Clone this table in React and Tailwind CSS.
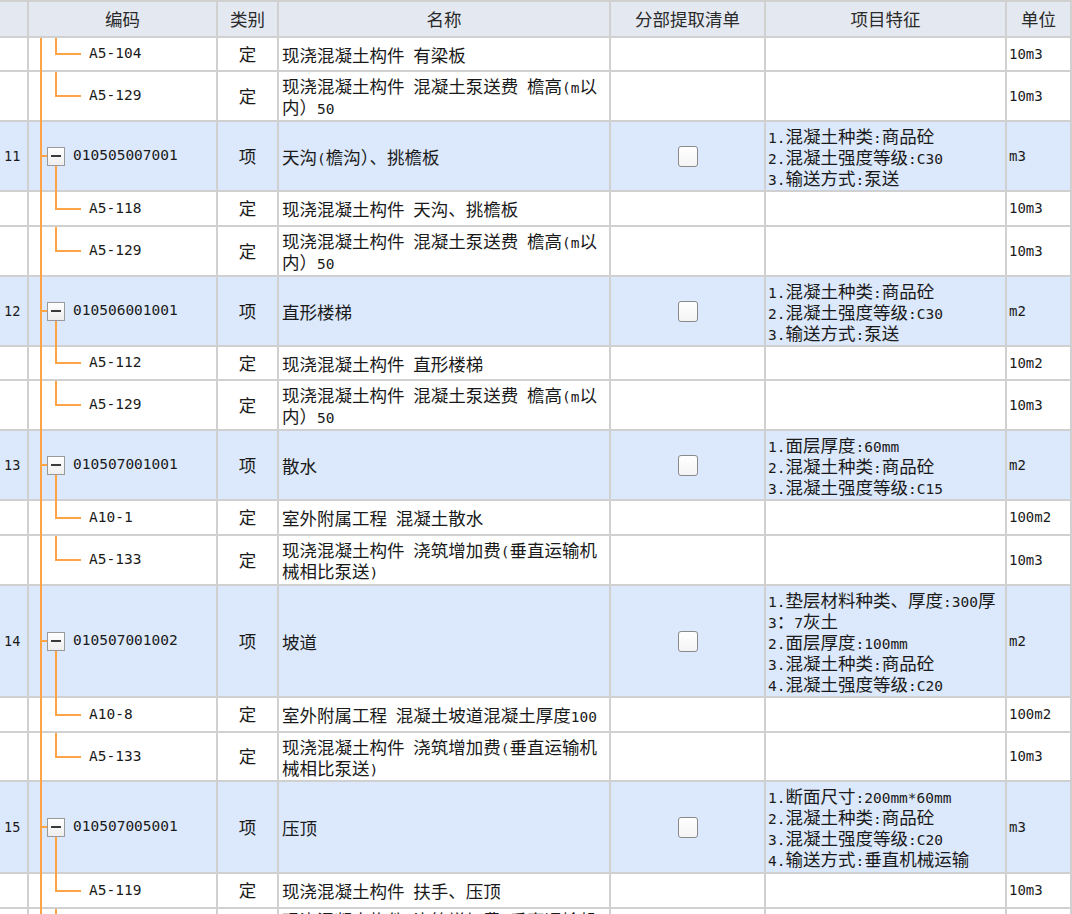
import React from "react";

const GRID = "grid grid-cols-[29px_189px_61px_332px_155px_241px_1fr]";
const CELL = "border-r-2 border-b-2 border-[#d0d0d0]";
const CJK = "font-['Noto_Sans_CJK_SC','Noto_Sans',sans-serif]";
const MONO = "font-['DejaVu_Sans_Mono','Liberation_Mono',monospace]";

const ORANGE = "bg-[#ffa347]";

const rows = [
  { code: "A5-104", type: "定", name: ["现浇混凝土构件 有梁板"], unit: "10m3", h: "h-[34px]" },
  { code: "A5-129", type: "定", name: ["现浇混凝土构件 混凝土泵送费 檐高(m以", "内）50"], unit: "10m3", h: "h-[50px]" },
  {
    item: true, no: "11", code: "010505007001", type: "项", name: ["天沟(檐沟）、挑檐板"],
    feat: ["1.混凝土种类:商品砼", "2.混凝土强度等级:C30", "3.输送方式:泵送"], unit: "m3", h: "h-[70px]",
  },
  { code: "A5-118", type: "定", name: ["现浇混凝土构件 天沟、挑檐板"], unit: "10m3", h: "h-[35px]" },
  { code: "A5-129", type: "定", name: ["现浇混凝土构件 混凝土泵送费 檐高(m以", "内）50"], unit: "10m3", h: "h-[50px]" },
  {
    item: true, no: "12", code: "010506001001", type: "项", name: ["直形楼梯"],
    feat: ["1.混凝土种类:商品砼", "2.混凝土强度等级:C30", "3.输送方式:泵送"], unit: "m2", h: "h-[70px]",
  },
  { code: "A5-112", type: "定", name: ["现浇混凝土构件 直形楼梯"], unit: "10m2", h: "h-[34px]" },
  { code: "A5-129", type: "定", name: ["现浇混凝土构件 混凝土泵送费 檐高(m以", "内）50"], unit: "10m3", h: "h-[50px]" },
  {
    item: true, no: "13", code: "010507001001", type: "项", name: ["散水"],
    feat: ["1.面层厚度:60mm", "2.混凝土种类:商品砼", "3.混凝土强度等级:C15"], unit: "m2", h: "h-[70px]",
  },
  { code: "A10-1", type: "定", name: ["室外附属工程 混凝土散水"], unit: "100m2", h: "h-[35px]" },
  { code: "A5-133", type: "定", name: ["现浇混凝土构件 浇筑增加费(垂直运输机", "械相比泵送)"], unit: "10m3", h: "h-[50px]" },
  {
    item: true, no: "14", code: "010507001002", type: "项", name: ["坡道"],
    feat: ["1.垫层材料种类、厚度:300厚", "3：7灰土", "2.面层厚度:100mm", "3.混凝土种类:商品砼", "4.混凝土强度等级:C20"],
    unit: "m2", h: "h-[112px]",
  },
  { code: "A10-8", type: "定", name: ["室外附属工程 混凝土坡道混凝土厚度100"], unit: "100m2", h: "h-[35px]" },
  { code: "A5-133", type: "定", name: ["现浇混凝土构件 浇筑增加费(垂直运输机", "械相比泵送)"], unit: "10m3", h: "h-[49px]" },
  {
    item: true, no: "15", code: "010507005001", type: "项", name: ["压顶"],
    feat: ["1.断面尺寸:200mm*60mm", "2.混凝土种类:商品砼", "3.混凝土强度等级:C20", "4.输送方式:垂直机械运输"],
    unit: "m3", h: "h-[92px]",
  },
  { code: "A5-119", type: "定", name: ["现浇混凝土构件 扶手、压顶"], unit: "10m3", h: "h-[35px]" },
  { code: "A5-133", type: "定", name: ["现浇混凝土构件 浇筑增加费(垂直运输机", "械相比泵送)"], unit: "10m3", h: "h-[44px]" },
];

function Mixed({ text }) {
  const parts = text.split(/([\x20-\x7e]+)/).filter((p) => p !== "");
  return parts.map((p, i) =>
    /^[\x20-\x7e]+$/.test(p) ? (
      <span key={i} className={`${MONO} text-[14.5px] leading-none`}>
        {p}
      </span>
    ) : (
      <span key={i}>{p}</span>
    )
  );
}

function Lines({ lines }) {
  return (
    <div>
      {lines.map((l, i) => (
        <div key={i} className="whitespace-pre h-[21px] leading-[21px]">
          <Mixed text={l} />
        </div>
      ))}
    </div>
  );
}

function CodeCell({ r }) {
  return (
    <div className={`${CELL} relative flex items-center ${r.item ? "pl-[18px]" : "pl-[60px]"}`}>
      <div className={`absolute left-[11px] top-0 bottom-[-2px] w-[2px] ${ORANGE}`} />
      {r.item ? (
        <>
          <div className={`absolute left-[13px] top-1/2 -translate-y-1/2 w-[5px] h-[2px] ${ORANGE}`} />
          <div className={`absolute left-[26px] top-[calc(50%+9px)] bottom-[-2px] w-[2px] ${ORANGE}`} />
          <div className="relative w-[18px] h-[19px] border border-[#9a9a9a] bg-gradient-to-b from-white to-[#eeeeee] flex items-center justify-center shrink-0">
            <div className="w-[10px] h-[2px] bg-[#3a3a3a]" />
          </div>
          <span className={`ml-[8px] ${MONO} text-[14.5px] text-[#1a1a1a]`}>{r.code}</span>
        </>
      ) : (
        <>
          <div className={`absolute left-[26px] top-0 h-1/2 w-[2px] ${ORANGE}`} />
          <div className={`absolute left-[26px] top-1/2 -translate-y-[1px] w-[26px] h-[2px] ${ORANGE}`} />
          <span className={`${MONO} text-[14.5px] text-[#1a1a1a]`}>{r.code}</span>
        </>
      )}
    </div>
  );
}

function Row({ r }) {
  return (
    <div className={`${GRID} ${r.h} ${r.item ? "bg-[#dce8fb]" : "bg-white"}`}>
      <div className={`${CELL} flex items-center pl-[4px] ${MONO} text-[13.5px] text-[#1a1a1a]`}>{r.no}</div>
      <CodeCell r={r} />
      <div className={`${CELL} flex items-center justify-center ${CJK} text-[17.5px] text-[#1a1a1a]`}>{r.type}</div>
      <div className={`${CELL} flex items-center pl-[3px] ${CJK} text-[17.5px] leading-[21px] text-[#1a1a1a] overflow-hidden`}>
        <Lines lines={r.name} />
      </div>
      <div className={`${CELL} flex items-center justify-center`}>
        {r.item && (
          <div className="w-[20px] h-[21px] rounded-[3px] border border-[#8a8a8a] bg-gradient-to-b from-white to-[#f4f4f4]" />
        )}
      </div>
      <div className={`${CELL} flex items-center pl-[2px] ${CJK} text-[17.5px] leading-[21px] text-[#1a1a1a] overflow-hidden`}>
        {r.feat && <Lines lines={r.feat} />}
      </div>
      <div className={`${CELL} flex items-center pl-[2px] ${MONO} text-[14px] text-[#1a1a1a]`}>{r.unit}</div>
    </div>
  );
}

export default function App() {
  const heads = ["", "编码", "类别", "名称", "分部提取清单", "项目特征", "单位"];
  return (
    <div className="w-[1072px] h-[914px] overflow-hidden bg-white">
      <div className={`${GRID} h-[38px] bg-[#e4e9f1]`}>
        {heads.map((h, i) => (
          <div
            key={i}
            className={`border-t-2 ${CELL} flex items-center justify-center ${CJK} text-[17.5px] text-[#2a2a2a]`}
          >
            {h}
          </div>
        ))}
      </div>
      {rows.map((r, i) => (
        <Row key={i} r={r} />
      ))}
    </div>
  );
}
